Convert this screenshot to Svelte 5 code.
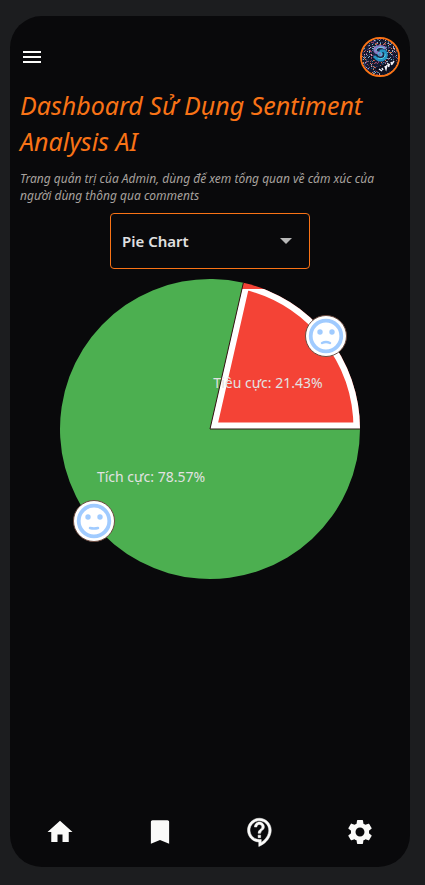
<script>
  let chart = $state('pie');

  const total = 360;
  const radius = 150;
  const slices = [
    { name: 'Tiêu cực', value: 21.43, color: '#f44336' },
    { name: 'Tích cực', value: 78.57, color: '#4caf50' }
  ];

  const point = (deg, r = radius) => {
    const a = (deg * Math.PI) / 180;
    return `${(radius + r * Math.cos(a)).toFixed(2)} ${(radius - r * Math.sin(a)).toFixed(2)}`;
  };
  const split = (slices[0].value / 100) * total;
  const negative = `M150 150L${point(0)}A150 150 0 0 0 ${point(split)}Z`;
  const positive = `M150 150L${point(split)}A150 150 0 1 0 ${point(0)}Z`;

  // Coloured pixels of the profile picture, scattered with a fixed seed.
  const palette = ['#2b4a6e', '#4d7da0', '#a34a55', '#d9774f', '#7fb6cf', '#35306b', '#c9a4b8', '#803a78', '#172c4c', '#0c1226'];
  let seed = 19;
  const random = () => {
    seed = (seed * 16807) % 2147483647;
    return seed / 2147483647;
  };
  const dots = Array.from({ length: 700 }, () => ({
    x: Math.floor(random() * 36),
    y: Math.floor(random() * 36),
    c: palette[Math.floor(random() * palette.length)]
  }));
</script>

<div class="page">
  <div class="card">
    <header>
      <button class="icon-button" aria-label="Menu">
        <svg width="24" height="24" viewBox="0 0 24 24"><path d="M3 18h18v-2H3v2zm0-5h18v-2H3v2zm0-7v2h18V6H3z" /></svg>
      </button>
      <button class="avatar" aria-label="Tài khoản">
        <svg width="36" height="36" viewBox="0 0 36 36">
          <rect width="36" height="36" fill="#141b30" />
          {#each dots as d}
            <rect x={d.x} y={d.y} width="1" height="1" fill={d.c} />
          {/each}
          <circle cx="18" cy="14" r="7" fill="#172746" />
          <g fill="none" stroke-linecap="round">
            <path d="M23 9C18 6 12 8 13 12c1 3 6 1 6 4" stroke="#8a78c0" stroke-width="3" />
            <path d="M19 12c5-2 7 5 3 8-3 2-7 1-9-2" stroke="#2494c4" stroke-width="3" />
            <path d="M22 9C18 7 14 9 14 12M23 15c1 3-3 6-7 4" stroke="#62d8ea" stroke-width="1" />
            <circle cx="18" cy="15" r="2" stroke="#49bde0" stroke-width="1" />
          </g>
          <path d="M12 30L34 20L36 29L20 36Z" fill="#0d1020" />
          <path d="M17 30l3 2m0-3l1 2m2-4l1 3 1-4m2 2l-1-3 2 1m2 0l-1-3m3-1l-2 3" fill="none" stroke="#f0f0f8" stroke-width="1.5" />
        </svg>
      </button>
    </header>

    <main>
      <h1>Dashboard Sử Dụng Sentiment Analysis AI</h1>
      <p class="intro">Trang quản trị của Admin, dùng để xem tổng quan về cảm xúc của người dùng thông qua comments</p>

      <div class="picker">
        <select aria-label="Loại biểu đồ" bind:value={chart}>
          <option value="pie">Pie Chart</option>
          <option value="bar">Bar Chart</option>
        </select>
        <svg class="arrow" width="24" height="24" viewBox="0 0 24 24"><path d="M6 9l6 6 6-6z" /></svg>
      </div>

      <svg class="chart" width="300" height="300" viewBox="0 0 300 300" role="img" aria-label="Pie Chart">
        <defs>
          <clipPath id="negative-clip"><path d={negative} /></clipPath>
          <clipPath id="outline-clip"><rect x="140" y="10" width="160" height="150" /></clipPath>
        </defs>
        <path d={positive} fill={slices[1].color} />
        <path d={negative} fill={slices[0].color} />
        <g clip-path="url(#outline-clip)">
          <g clip-path="url(#negative-clip)">
            <path d={negative} fill="none" stroke="#fff" stroke-width="13" />
          </g>
        </g>
        <path d="M{point(split)}L150 150H300" fill="none" stroke="#2c1712" stroke-width="1" />
        {#each [{ x: 266, y: 57, mouth: 'M-4 7Q0 5 4 7' }, { x: 34, y: 242, mouth: 'M-4 7Q0 8 4 7' }] as face}
          <g transform="translate({face.x} {face.y})">
            <circle r="20.5" fill="#fff" stroke="#6d4c41" stroke-width="1" />
            <circle r="15.3" fill="none" stroke="#a0cbff" stroke-width="3.8" />
            <circle cx="-6" cy="-4" r="2.7" fill="#a0cbff" />
            <circle cx="6" cy="-4" r="2.7" fill="#a0cbff" />
            <path d={face.mouth} fill="none" stroke="#a0cbff" stroke-width="2.5" stroke-linecap="round" />
          </g>
        {/each}
        <text x="208" y="109">{slices[0].name}: {slices[0].value}%</text>
        <text x="91" y="203">{slices[1].name}: {slices[1].value}%</text>
      </svg>
    </main>

    <nav>
      <a href="#home" aria-label="Trang chủ">
        <svg width="30" height="30" viewBox="0 0 24 24"><path d="M10 20v-6h4v6h5v-8h3L12 3 2 12h3v8z" /></svg>
      </a>
      <a href="#saved" aria-label="Đã lưu">
        <svg width="30" height="30" viewBox="0 0 24 24"><path d="M18 2.600H6c-.7 0-1.300.6-1.300 1.300v17.400l7.300-3 7.300 3V3.900c0-.7-.6-1.300-1.300-1.300z" /></svg>
      </a>
      <a href="#support" aria-label="Hỗ trợ">
        <svg class="bold" width="30" height="30" viewBox="0 0 24 24"><path d="M11 23.590v-3.600c-5.010-.26-9-4.420-9-9.490C2 5.260 6.260 1 11.500 1S21 5.260 21 10.500c0 4.950-3.440 9.930-8.570 12.400l-1.430.690zM11.500 3C7.360 3 4 6.360 4 10.500S7.360 18 11.500 18H13v2.300c3.640-2.300 6-6.080 6-9.800C19 6.360 15.640 3 11.500 3zm-1 11.500h2v2h-2v-2zm2-1.500h-2c0-3.250 3-3 3-5 0-1.100-.9-2-2-2s-2 .9-2 2h-2c0-2.210 1.790-4 4-4s4 1.790 4 4c0 2.500-3 2.750-3 5z" /></svg>
      </a>
      <a href="#settings" aria-label="Cài đặt">
        <svg width="30" height="30" viewBox="0 0 24 24"><path d="M19.140 12.940c.04-.3.06-.61.06-.94 0-.32-.02-.64-.07-.94l2.030-1.580c.18-.14.23-.41.12-.61l-1.920-3.320c-.12-.22-.37-.29-.59-.22l-2.390.96c-.5-.38-1.030-.7-1.620-.94l-.36-2.540c-.04-.24-.24-.41-.48-.41h-3.840c-.24 0-.43.17-.47.41l-.36 2.540c-.59.24-1.130.57-1.620.94l-2.390-.96c-.22-.08-.47 0-.59.22L2.740 8.870c-.12.21-.08.47.12.61l2.030 1.580c-.05.3-.09.63-.09.94s.02.64.07.94l-2.030 1.580c-.18.14-.23.41-.12.61l1.920 3.320c.12.22.37.29.59.22l2.390-.96c.5.38 1.030.7 1.620.94l.36 2.540c.05.24.24.41.48.41h3.840c.24 0 .44-.17.47-.41l.36-2.540c.59-.24 1.130-.56 1.620-.94l2.390.96c.22.08.47 0 .59-.22l1.920-3.320c.12-.22.07-.47-.12-.61l-2.010-1.580zM12 15.600c-1.980 0-3.600-1.620-3.600-3.600s1.620-3.600 3.600-3.600 3.600 1.620 3.600 3.600-1.620 3.600-3.600 3.600z" /></svg>
      </a>
    </nav>
  </div>
</div>

<style>
  :global(body) {
    background: #1c1d1f;
  }
  .page {
    box-sizing: border-box;
    min-height: 100vh;
    display: flex;
    padding: 16px 15px 18px 10px;
    font-family: 'Noto Sans', 'Open Sans', sans-serif;
  }
  .card {
    flex: 1;
    min-width: 0;
    display: flex;
    flex-direction: column;
    border-radius: 32px;
    background: #09090b;
    overflow: hidden;
  }
  header {
    display: flex;
    align-items: center;
    justify-content: space-between;
    padding: 21px 10px 0;
  }
  button {
    padding: 0;
    border: 0;
    background: none;
    cursor: pointer;
  }
  button svg {
    display: block;
  }
  .icon-button svg,
  nav svg {
    fill: #fafaf9;
  }
  nav .bold {
    stroke: #fafaf9;
    stroke-width: 0.4;
  }
  .avatar {
    border: 2px solid #f97316;
    border-radius: 50%;
    overflow: hidden;
  }
  main {
    flex: 1;
    display: flex;
    flex-direction: column;
    padding: 10px 10px 0;
  }
  h1 {
    margin: 0;
    color: #f97316;
    font-size: 25px;
    font-style: italic;
    font-weight: 400;
    line-height: 36px;
  }
  .intro {
    margin: 11px 0 0;
    color: #a8a29e;
    font-size: 12px;
    font-style: italic;
    line-height: 17px;
  }
  .picker {
    position: relative;
    align-self: center;
    margin-top: 9px;
  }
  select {
    appearance: none;
    display: block;
    width: 200px;
    height: 56px;
    padding: 0 36px 0 11px;
    border: 1px solid #f97316;
    border-radius: 4px;
    background: transparent;
    color: #e0e0e0;
    font: 600 15px 'Noto Sans', 'Open Sans', sans-serif;
  }
  option {
    background: #09090b;
  }
  .arrow {
    position: absolute;
    top: 16px;
    right: 12px;
    fill: #b8b8b8;
    pointer-events: none;
  }
  .chart {
    display: block;
    align-self: center;
    margin-top: 10px;
    overflow: visible;
  }
  .chart text {
    fill: #e2e2e2;
    font-size: 14px;
    text-anchor: middle;
  }
  nav {
    display: flex;
    padding-bottom: 20px;
  }
  nav a {
    flex: 1;
    display: flex;
    justify-content: center;
  }
</style>
